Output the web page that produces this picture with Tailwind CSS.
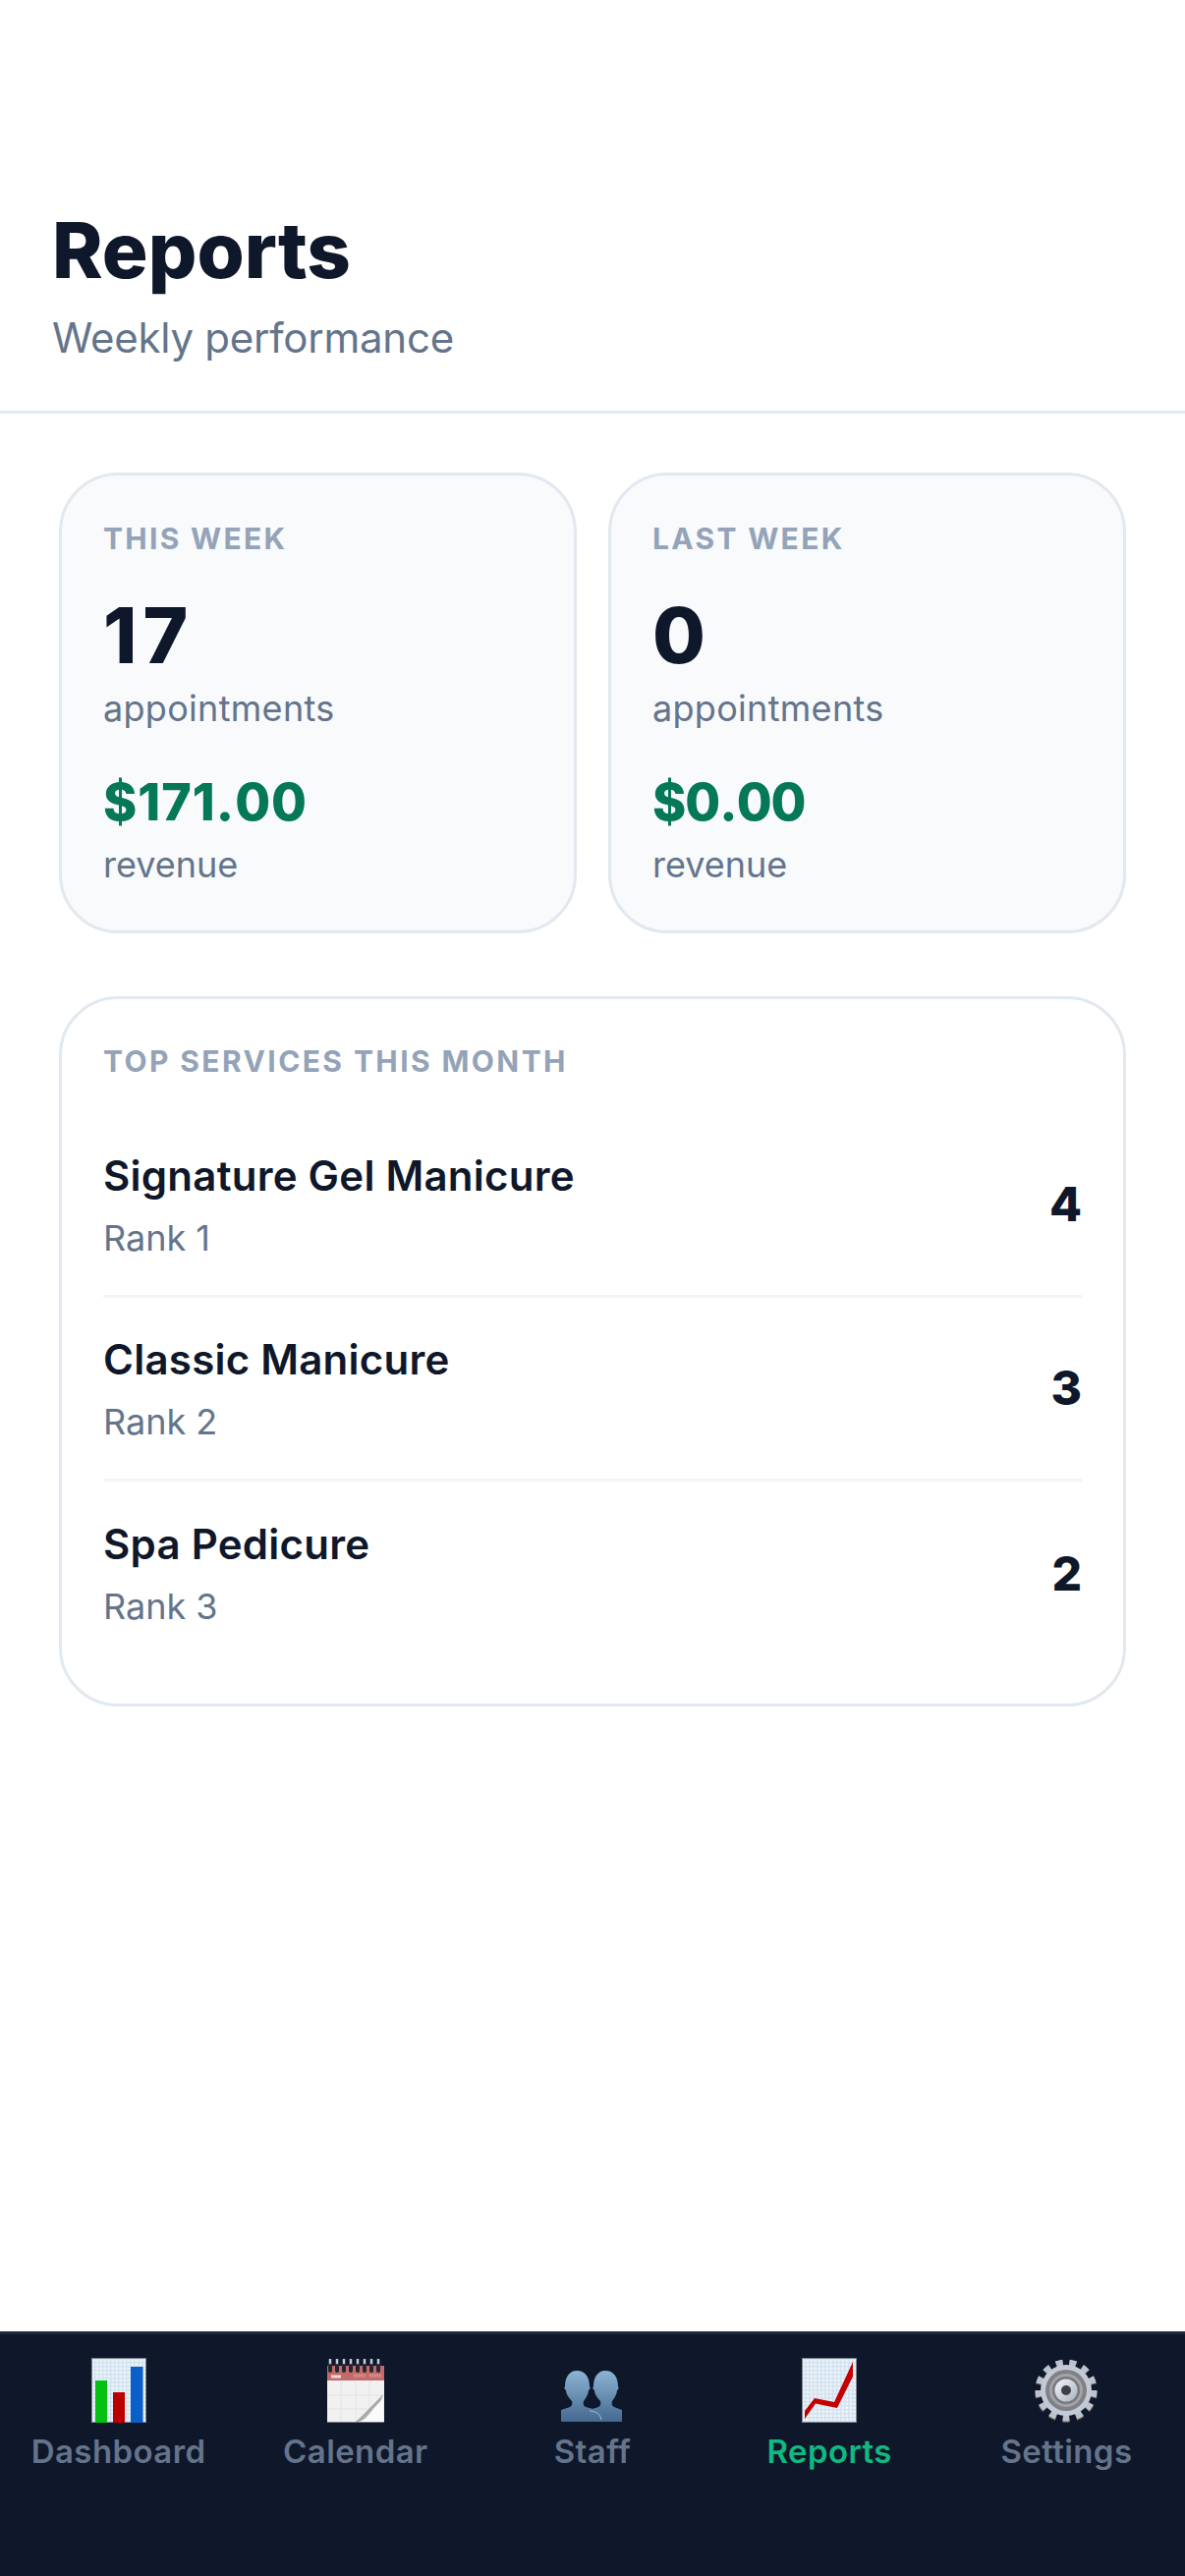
<!DOCTYPE html>
<html lang="en">
<head>
<meta charset="UTF-8">
<meta name="viewport" content="width=device-width, initial-scale=1.0">
<title>Reports</title>
<script src="https://cdn.jsdelivr.net/npm/@tailwindcss/browser@4"></script>
</head>
<body class="bg-white font-['Inter',sans-serif]">
<div class="w-[1206px] h-[2622px] flex flex-col overflow-hidden">

  <!-- shared svg defs -->
  <svg width="0" height="0" class="absolute">
    <defs>
      <pattern id="graph" width="4" height="4" patternUnits="userSpaceOnUse">
        <rect width="4" height="4" fill="#eef3f8"/>
        <rect width="1.5" height="4" fill="#d3e3f1"/>
        <rect width="4" height="1.5" fill="#d3e3f1"/>
      </pattern>
      <linearGradient id="person" x1="0" y1="0" x2="0" y2="1">
        <stop offset="0" stop-color="#8db4d3"/>
        <stop offset="1" stop-color="#44688f"/>
      </linearGradient>
      <linearGradient id="curl" x1="0" y1="0" x2="1" y2="1">
        <stop offset="0" stop-color="#3f3f3f"/>
        <stop offset="0.6" stop-color="#b5b5b5"/>
        <stop offset="1" stop-color="#eeeeee"/>
      </linearGradient>
      <linearGradient id="ring" x1="0" y1="0" x2="1" y2="1">
        <stop offset="0" stop-color="#f2f4f8"/>
        <stop offset="1" stop-color="#aab2c0"/>
      </linearGradient>
    </defs>
  </svg>

  <!-- header -->
  <header class="h-[421px] pt-[208px] px-[53px] border-b-[3px] border-[#e2e8f0]">
    <h1 class="text-[78px] leading-[94px] font-extrabold text-[#0f172a]">Reports</h1>
    <p class="mt-[16px] text-[42px] leading-[51px] tracking-[-0.25px] text-[#64748b]">Weekly performance</p>
  </header>

  <main class="flex-1 px-[60px] pt-[60px]">
    <div class="grid grid-cols-2 gap-[32px]">
      <div class="h-[469px] rounded-[60px] border-[3px] border-[#e2e8f0] bg-[#f8fafc] px-[42px] pt-[46px]">
        <p class="text-[30px] leading-[36px] font-bold tracking-[2.3px] text-[#94a3b8]">THIS WEEK</p>
        <p class="mt-[34px] text-[78px] leading-[94px] font-extrabold tracking-[6px] text-[#0f172a] [font-kerning:none]">17</p>
        <p class="mt-[5px] text-[36px] leading-[44px] tracking-[0.3px] text-[#64748b]">appointments</p>
        <p class="mt-[41px] text-[52px] leading-[65px] font-extrabold tracking-[1px] text-[#047857] [font-kerning:none]">$171.00</p>
        <p class="mt-[9px] text-[36px] leading-[44px] text-[#64748b]">revenue</p>
      </div>
      <div class="h-[469px] rounded-[60px] border-[3px] border-[#e2e8f0] bg-[#f8fafc] px-[42px] pt-[46px]">
        <p class="text-[30px] leading-[36px] font-bold tracking-[2.3px] text-[#94a3b8]">LAST WEEK</p>
        <p class="mt-[34px] text-[78px] leading-[94px] font-extrabold text-[#0f172a] [font-kerning:none]">0</p>
        <p class="mt-[5px] text-[36px] leading-[44px] tracking-[0.3px] text-[#64748b]">appointments</p>
        <p class="mt-[41px] text-[52px] leading-[65px] font-extrabold tracking-[-1px] text-[#047857] [font-kerning:none]">$0.00</p>
        <p class="mt-[9px] text-[36px] leading-[44px] text-[#64748b]">revenue</p>
      </div>
    </div>

    <div class="mt-[64px] h-[723px] rounded-[60px] border-[3px] border-[#e2e8f0] bg-white px-[42px] pt-[45px]">
      <p class="text-[30px] leading-[36px] font-bold tracking-[2.4px] text-[#94a3b8]">TOP SERVICES THIS MONTH</p>
      <div class="mt-[36px]">
        <div class="h-[187px] flex items-center justify-between border-b-[3px] border-[#f1f5f9]">
          <div>
            <p class="text-[42px] leading-[51px] font-semibold tracking-[0.25px] text-[#0f172a]">Signature Gel Manicure</p>
            <p class="mt-[16px] text-[36px] leading-[44px] text-[#64748b]">Rank 1</p>
          </div>
          <span class="text-[48px] font-extrabold text-[#0f172a]">4</span>
        </div>
        <div class="h-[187px] flex items-center justify-between border-b-[3px] border-[#f1f5f9]">
          <div>
            <p class="text-[42px] leading-[51px] font-semibold tracking-[0.25px] text-[#0f172a]">Classic Manicure</p>
            <p class="mt-[16px] text-[36px] leading-[44px] text-[#64748b]">Rank 2</p>
          </div>
          <span class="text-[48px] font-extrabold text-[#0f172a]">3</span>
        </div>
        <div class="h-[187px] flex items-center justify-between">
          <div>
            <p class="text-[42px] leading-[51px] font-semibold tracking-[0.25px] text-[#0f172a]">Spa Pedicure</p>
            <p class="mt-[16px] text-[36px] leading-[44px] text-[#64748b]">Rank 3</p>
          </div>
          <span class="text-[48px] font-extrabold text-[#0f172a]">2</span>
        </div>
      </div>
    </div>
  </main>

  <!-- tab bar -->
  <nav class="h-[249px] bg-[#0f172a] border-t-[3px] border-[#1e293b] flex pt-[24px]">
    <div class="flex-1 flex flex-col items-center">
      <svg width="66" height="66" viewBox="0 0 66 66">
        <rect x="5.5" y="0.5" width="55" height="65" fill="url(#graph)" stroke="#7d8793"/>
        <rect x="9" y="23" width="12" height="43" fill="#06c014"/>
        <rect x="27" y="35" width="12" height="31" fill="#bb0000"/>
        <rect x="45" y="9" width="12.500" height="57" fill="#0a5fc8"/>
      </svg>
      <span class="mt-[9px] text-[33px] leading-[40px] font-semibold tracking-[0.4px] text-[#64748b]">Dashboard</span>
    </div>
    <div class="flex-1 flex flex-col items-center">
      <svg width="66" height="66" viewBox="0 0 66 66">
        <rect x="4" y="8" width="58" height="58" fill="#f1f1f1"/>
        <path d="M4 38H62M4 52H62M18 22V66M33 22V66M47 22V66" stroke="#e3e3e3" stroke-width="1"/>
        <rect x="4" y="8" width="58" height="15" fill="#c46a6a"/>
        <path d="M8 19H18" stroke="#f3dada" stroke-width="3"/>
        <path d="M31 18H43M47 18H59" stroke="#d99a9a" stroke-width="3" stroke-dasharray="1.500 1"/>
        <path d="M7 12V1M14 12V1M21 12V1M28 12V1M35 12V1M42 12V1M49 12V1M56 12V1" stroke="#c3ccd6" stroke-width="2.500"/>
        <path d="M7 13V8M14 13V8M21 13V8M28 13V8M35 13V8M42 13V8M49 13V8M56 13V8" stroke="#23272e" stroke-width="4" stroke-linecap="round"/>
        <path d="M33 65C41 58 48 50 61 37C57 48 52 58 46 65Z" fill="url(#curl)"/>
        <path d="M36 65C46 63 48 52 61 42V65Z" fill="#fafafa"/>
        <path d="M4 65.500H62" stroke="#777c85" stroke-width="1"/>
      </svg>
      <span class="mt-[9px] text-[33px] leading-[40px] font-semibold tracking-[0.4px] text-[#64748b]">Calendar</span>
    </div>
    <div class="flex-1 flex flex-col items-center">
      <svg width="66" height="66" viewBox="0 0 66 66">
        <path d="M30 65V53L39 50C41 49 42 47 41 44C37 40 35 36 35 33C33 32 33 30 34 29C34 19 39 13 46 13C54 13 59 19 59 29C60 30 60 32 58 33C58 36 56 40 53 44C52 47 53 49 55 50L63 53V65Z" fill="url(#person)"/>
        <path d="M1 65V53L10 50C12 49 13 47 12 44C8 40 6 36 6 33C4 32 4 30 5 29C5 19 10 13 17 13C25 13 30 19 30 29C31 30 31 32 29 33C29 36 27 40 24 44C23 47 24 49 26 50L38 53V65Z" fill="url(#person)"/>
        <path d="M30 54C36 54 41 57 42 63" fill="none" stroke="#9cc0dc" stroke-width="1"/>
      </svg>
      <span class="mt-[9px] text-[33px] leading-[40px] font-semibold tracking-[0.4px] text-[#64748b]">Staff</span>
    </div>
    <div class="flex-1 flex flex-col items-center">
      <svg width="66" height="66" viewBox="0 0 66 66">
        <rect x="5.500" y="0.500" width="55" height="65" fill="url(#graph)" stroke="#7d8793"/>
        <path d="M8 62V54L18 41L38 45L57 4V19L41 51L19 46.500Z" fill="#c40000"/>
      </svg>
      <span class="mt-[9px] text-[33px] leading-[40px] font-semibold tracking-[0.4px] text-[#10b981]">Reports</span>
    </div>
    <div class="flex-1 flex flex-col items-center">
      <svg width="66" height="66" viewBox="0 0 66 66">
        <circle cx="33" cy="34" r="28" fill="none" stroke="#5b5148" stroke-width="8" pathLength="130" stroke-dasharray="5 5"/>
        <circle cx="33" cy="33" r="27" fill="none" stroke="#bcc3cf" stroke-width="9" pathLength="130" stroke-dasharray="5 5"/>
        <circle cx="33" cy="33" r="26" fill="#c4cad5"/>
        <circle cx="33" cy="33" r="21" fill="#808186"/>
        <circle cx="33" cy="33" r="17" fill="#a2a3a8"/>
        <circle cx="33" cy="33" r="14" fill="#77787d"/>
        <circle cx="33" cy="33" r="11.500" fill="url(#ring)"/>
        <circle cx="33" cy="33" r="5" fill="#3c3f46"/>
      </svg>
      <span class="mt-[9px] text-[33px] leading-[40px] font-semibold tracking-[0.4px] text-[#64748b]">Settings</span>
    </div>
  </nav>
</div>
</body>
</html>
